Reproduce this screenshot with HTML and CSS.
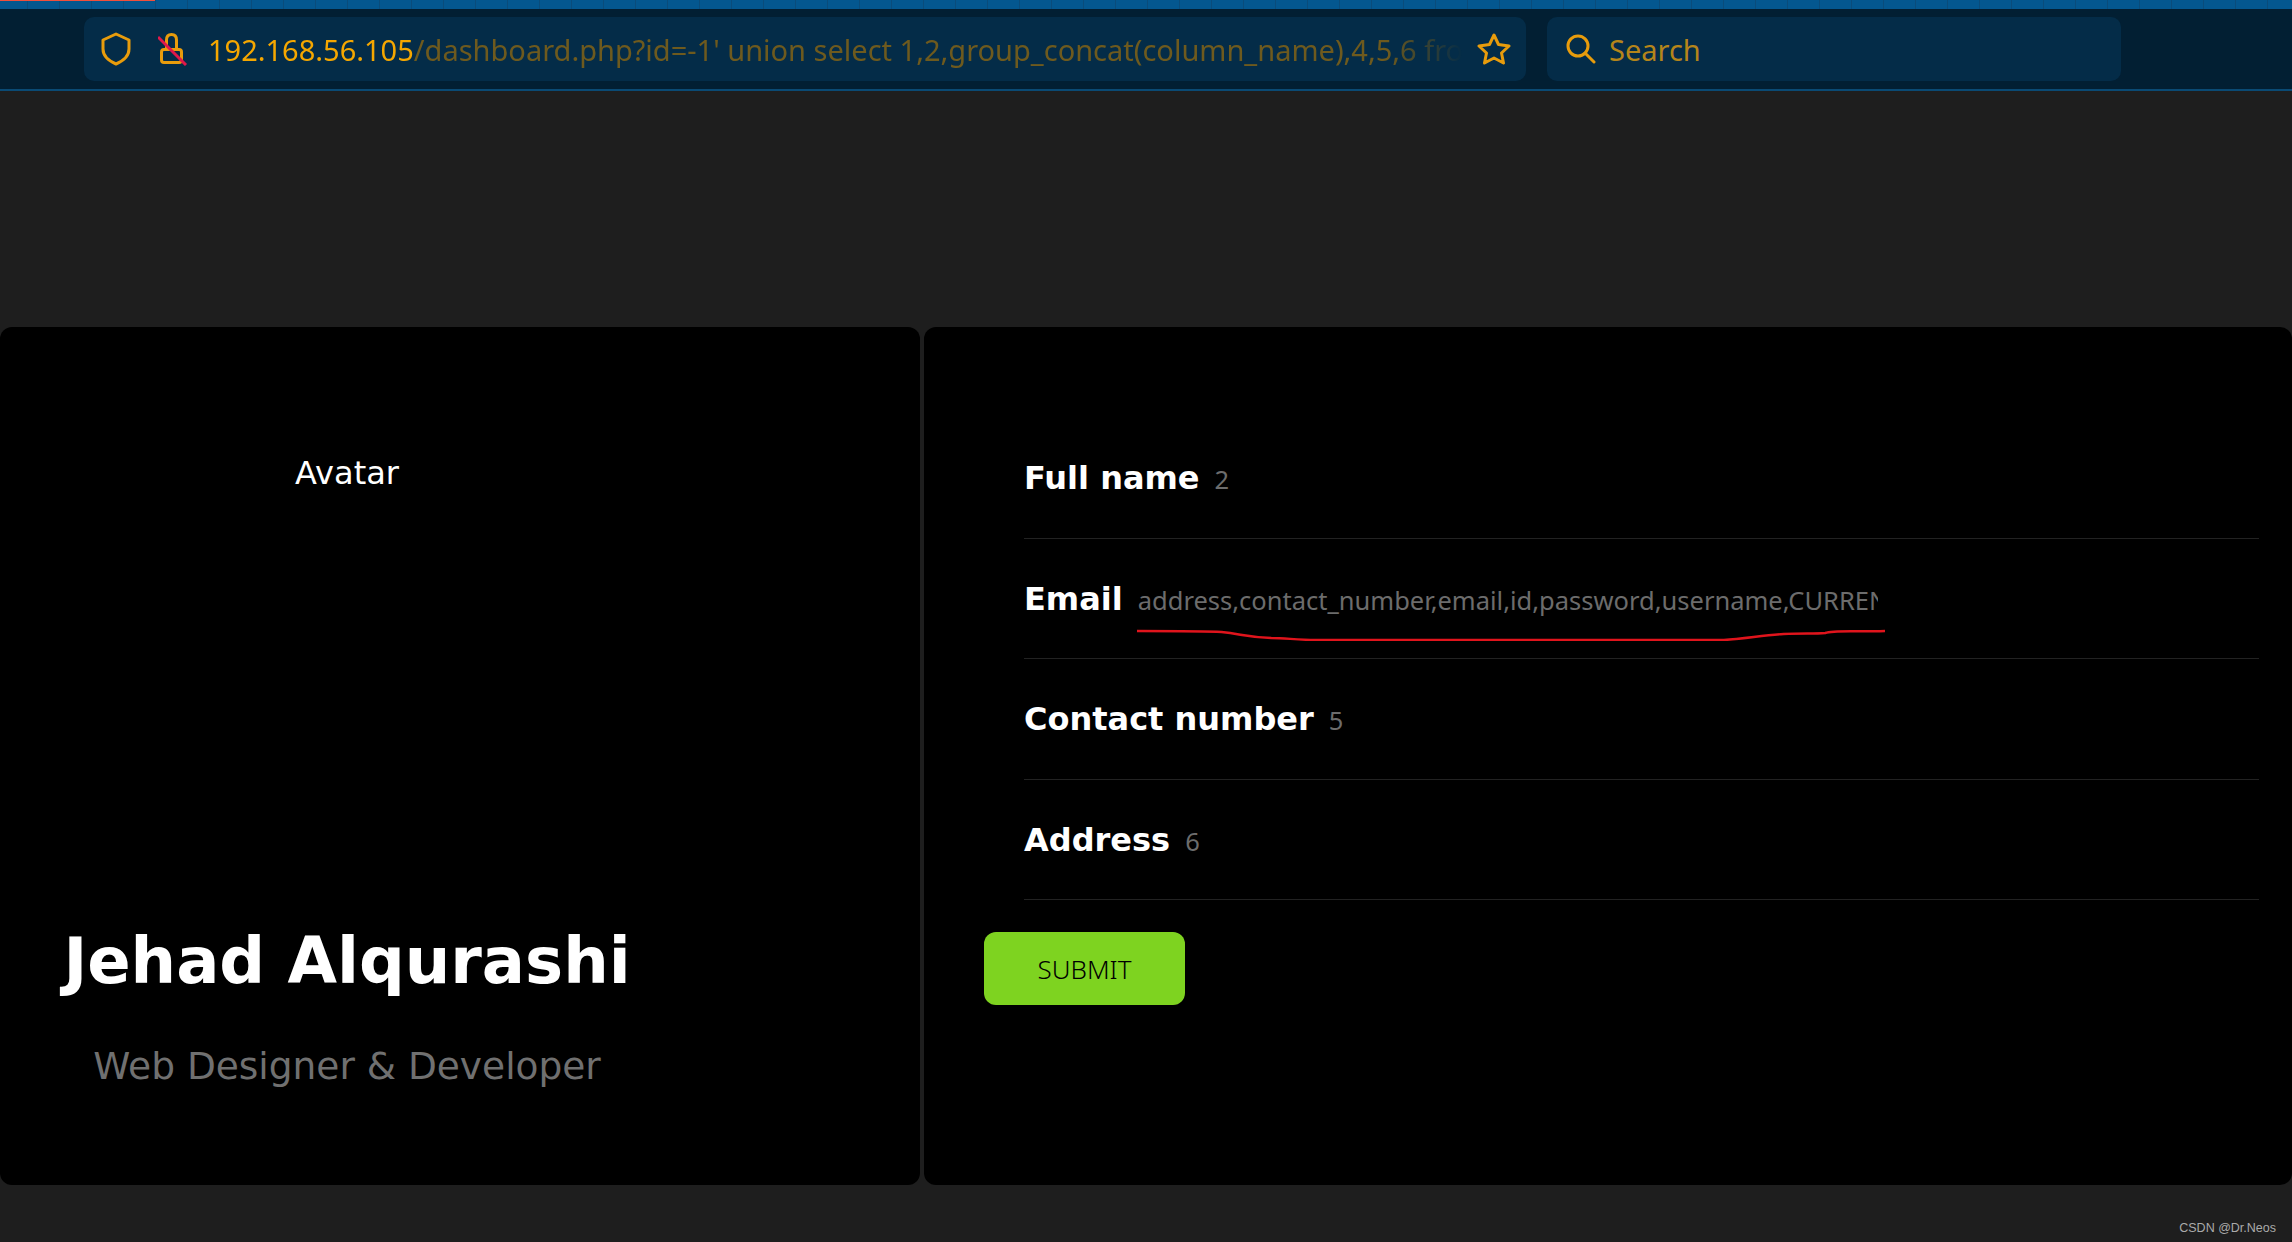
FILE: index.html
```html
<!DOCTYPE html>
<html lang="en">
<head>
    <meta charset="UTF-8">
    <title>Dashboard</title>
    <link rel="stylesheet" href="styles.css">
</head>
<body>
    <div class="tab-strip"><div class="tab-progress"></div></div>
    <div class="toolbar">
        <div class="url-bar">
            <svg class="icon-shield" width="30" height="34" viewBox="0 0 30 34" fill="none" stroke="#e89c0c" stroke-width="3" stroke-linejoin="round">
                <path d="M15 2 L28 8 V17 C28 24 22 29 15 32 C8 29 2 24 2 17 V8 Z"/>
            </svg>
            <svg class="icon-lock" width="30" height="34" viewBox="0 0 30 34" fill="none" stroke-width="3">
                <path d="M8.500 17 V8 C8.500 4.500 10.500 2.500 13.500 2.500 C16.500 2.500 18.500 4.500 18.500 8 V17" stroke="#e89c0c"/>
                <rect x="3.500" y="17.500" width="20" height="13" rx="2.500" stroke="#e89c0c"/>
                <path d="M0 5 L28 33" stroke="#e0184a"/>
            </svg>
            <div class="url-text"><span class="url-host">192.168.56.105</span>/dashboard.php?id=-1' union select 1,2,group_concat(column_name),4,5,6 from</div>
            <svg class="icon-star" width="34" height="32" viewBox="0 0 34 32" fill="none" stroke="#e89c0c" stroke-width="3" stroke-linejoin="round">
                <path d="M17 2 L21.500 11.500 L32 13 L24.500 20 L26.500 30 L17 25 L7.500 30 L9.500 20 L2 13 L12.500 11.500 Z"/>
            </svg>
        </div>
        <div class="search-bar">
            <svg class="icon-search" width="30" height="30" viewBox="0 0 30 30" fill="none" stroke="#e89c0c" stroke-width="3" stroke-linecap="round">
                <circle cx="12" cy="12" r="10"/>
                <path d="M19 19 L28 28"/>
            </svg>
            <span class="search-text">Search</span>
        </div>
    </div>

    <div class="page">
        <div class="card profile">
            <div class="avatar-text">Avatar</div>
            <div class="profile-info">
                <h1>Jehad Alqurashi</h1>
                <p>Web Designer &amp; Developer</p>
            </div>
        </div>
        <div class="card details">
            <div class="row"><b>Full name</b><span>2</span></div>
            <div class="row row-email">
                <b>Email</b><span class="clip">address,contact_number,email,id,password,username,CURRENT_CONNECTIONS</span>
                <svg class="scribble" width="748" height="12" viewBox="0 0 752 12" fill="none" stroke="#e0141c" stroke-width="2.500">
                    <path d="M0 2 C40 2 70 2 85 3 C105 5 110 8 135 9 C150 9 160 11 180 11 L590 11 C610 10 630 6 650 5 C670 4 680 5 692 4 C700 1 720 3 752 2"/>
                </svg>
            </div>
            <div class="row"><b>Contact number</b><span>5</span></div>
            <div class="row"><b>Address</b><span>6</span></div>
            <button class="submit">SUBMIT</button>
        </div>
    </div>
    <div class="watermark">CSDN @Dr.Neos</div>
</body>
</html>
```

FILE: styles.css
```css
html, body {
    height: 100%;
}

body {
    margin: 0;
    background-color: #1e1e1e;
    font-family: 'DejaVu Sans', sans-serif;
    overflow: hidden;
    position: relative;
}

.tab-strip {
    height: 9px;
    background-color: #04578f;
    background-image: repeating-linear-gradient(90deg, #04578f 0, #04578f 27px, #0a4c7b 27px, #0a4c7b 28px, #04578f 28px, #04578f 32px);
}

.tab-progress {
    width: 155px;
    height: 1px;
    background-color: #f0503c;
}

.toolbar {
    display: flex;
    gap: 21px;
    height: 80px;
    padding: 8px 171px 8px 84px;
    box-sizing: border-box;
    background-color: #021f33;
}

.toolbar + .page {
    border-top: 2px solid #0a4a74;
}

.url-bar,
.search-bar {
    display: flex;
    align-items: center;
    height: 64px;
    background-color: #042c48;
    border-radius: 10px;
}

.url-bar {
    flex: 1;
    min-width: 0;
    padding: 0 15px 0 17px;
}

.search-bar {
    width: 574px;
    flex-shrink: 0;
    padding-left: 19px;
    box-sizing: border-box;
}

.icon-shield {
    flex-shrink: 0;
}

.icon-lock {
    flex-shrink: 0;
    margin-left: 27px;
}

.icon-star {
    flex-shrink: 0;
}

.url-text {
    flex: 1;
    min-width: 0;
    margin: 0 14px 0 20px;
    overflow: hidden;
    white-space: nowrap;
    font-family: 'Noto Sans', sans-serif;
    font-size: 29px;
    color: #6e5a1e;
    -webkit-mask-image: linear-gradient(90deg, #000 94%, transparent 100%);
    mask-image: linear-gradient(90deg, #000 94%, transparent 100%);
}

.url-host {
    color: #f5a700;
}

.search-text {
    margin-left: 13px;
    font-family: 'Noto Sans', sans-serif;
    font-size: 29px;
    color: #b5851a;
}

.page {
    display: flex;
    gap: 4px;
    padding-top: 236px;
}

.card {
    height: 858px;
    background-color: #000;
    border-radius: 12px;
    box-sizing: border-box;
}

.profile {
    width: 920px;
    display: flex;
    flex-direction: column;
    justify-content: space-between;
    padding: 127px 226px 97.500px 0;
    color: #fff;
    text-align: center;
}

.avatar-text {
    font-size: 32px;
}

.profile-info h1 {
    margin: 0;
    font-size: 64px;
    font-weight: bold;
    white-space: nowrap;
}

.profile-info p {
    margin: 45.500px 0 0;
    font-size: 37.500px;
    color: #707070;
}

.details {
    flex: 1;
    padding: 91px 33px 0 100px;
}

.row {
    position: relative;
    display: flex;
    align-items: baseline;
    height: 120.500px;
    padding-top: 41px;
    box-sizing: border-box;
    border-bottom: 1px solid #222;
}

.row b {
    font-size: 32px;
    color: #fff;
    white-space: nowrap;
}

.row span {
    margin-left: 15px;
    font-family: 'Noto Sans', sans-serif;
    font-size: 25.500px;
    color: #6c6c6c;
}

.row .clip {
    width: 740px;
    overflow: hidden;
    white-space: nowrap;
}

.scribble {
    position: absolute;
    left: 113px;
    top: 90px;
}

.submit {
    display: block;
    width: 201px;
    height: 73px;
    margin: 32px 0 0 -40px;
    border: none;
    border-radius: 12px;
    background-color: #7ed320;
    color: #000;
    font-family: 'Noto Sans', sans-serif;
    font-size: 26px;
    font-weight: 300;
}

.watermark {
    position: absolute;
    right: 16px;
    bottom: 7px;
    font-family: 'Liberation Sans', sans-serif;
    font-size: 12.500px;
    color: #aaa;
}
```
